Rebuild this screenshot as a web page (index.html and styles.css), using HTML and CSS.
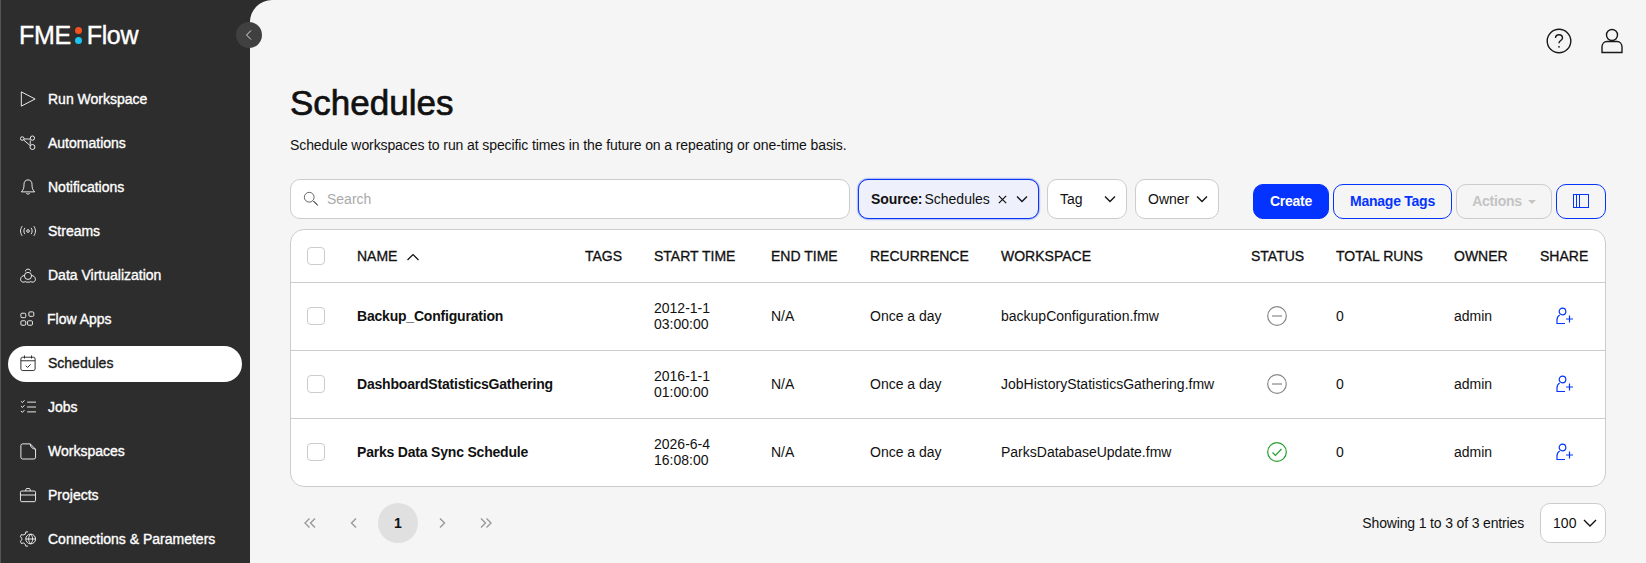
FILE: index.html
```html
<!DOCTYPE html>
<html lang="en">
<head>
  <meta charset="UTF-8" />
  <title>FME Flow - Schedules</title>
  <link rel="stylesheet" href="styles.css">
</head>
<body>
<div class="app">
  <div class="sidebar">
    <div class="logo"><span>FME</span><span class="logo-dots"><i class="dot-orange"></i><i class="dot-cyan"></i></span><span>Flow</span></div>
    <div class="nav">
      <a href="#"><svg viewBox="0 0 18 18"><path d="M1.500 1 17 9 1.500 17z"/></svg>Run Workspace</a>
      <a href="#"><svg viewBox="0 0 18 18"><circle cx="2.500" cy="4" r="2"/><circle cx="14" cy="3.500" r="2.400"/><circle cx="14" cy="13.500" r="2.800"/><path d="M4.500 4.500h7M4 5.500l7.500 6.500M11.500 6v5"/></svg>Automations</a>
      <a href="#"><svg viewBox="0 0 18 18"><path d="M9 1c-3 0-4.500 2.300-4.500 5 0 4-.5 6-3 8.500h15c-2.500-2.500-3-4.500-3-8.500 0-2.700-1.500-5-4.500-5zM7 16c.5 1.300 3.500 1.300 4 0"/></svg>Notifications</a>
      <a href="#"><svg viewBox="0 0 18 18"><circle cx="9" cy="9" r="1.500"/><path d="M5.500 5.500c-1.500 2-1.500 5 0 7M12.500 5.500c1.500 2 1.500 5 0 7M2.500 3.500c-2.500 3.500-2.500 7.500 0 11M15.500 3.500c2.500 3.500 2.500 7.500 0 11"/></svg>Streams</a>
      <a href="#"><svg viewBox="0 0 18 18"><circle cx="9" cy="10" r="4"/><path d="M6.300 5c-.8-3.500 6.200-3.500 5.400 0M5 9.500C.5 10-.5 15 2 16.500c1.500 1 3.500.5 4.500-.5M13 9.500c4.500.5 5.500 5.500 3 7-1.500 1-3.500.5-4.500-.5M6.500 17h5"/></svg>Data Virtualization</a>
      <a href="#" class="nav-apps"><svg viewBox="0 0 18 18"><rect x="1" y="2.500" width="5.500" height="5" rx="1.200"/><rect x="10" y="1" width="5.500" height="5" rx="1.200"/><rect x="1" y="11" width="5.500" height="5" rx="1.200"/><rect x="8.500" y="11" width="5.500" height="5" rx="1.200"/></svg>Flow Apps</a>
      <a href="#" class="active"><svg viewBox="0 0 18 18"><rect x="1" y="2.500" width="16" height="15" rx="2"/><path d="M1 6.500h16M5 .5v3.500M13 .5v3.500M6.500 12l2 2 3.500-3.500"/></svg>Schedules</a>
      <a href="#"><svg viewBox="0 0 18 18"><path d="M1 2.500 2.800 4 5 1.500M1 8l1.800 1.500L5 7M1 13.500 2.800 15 5 12.500M8 3.500h10M8 9h10M8 14.500h10"/></svg>Jobs</a>
      <a href="#"><svg viewBox="0 0 18 18"><path d="M3 1h8.500L17.500 7v9a2 2 0 0 1-2 2H3a2 2 0 0 1-2-2V3a2 2 0 0 1 2-2zM11.500 1c.3 3.500 2 5.500 6 6"/></svg>Workspaces</a>
      <a href="#"><svg viewBox="0 0 18 18"><rect x=".5" y="4.500" width="17" height="12" rx="1.500"/><path d="M.5 9h17M6.500 4.500V3c0-.8.500-1.300 1.300-1.300h2.400c.8 0 1.300.5 1.300 1.300v1.500"/></svg>Projects</a>
      <a href="#"><svg viewBox="0 0 18 18"><path d="M6.500 1h2.500M6.500 1 6 3.500 3.500 4.500 1.500 4 .5 6.500l1.500 1.500v2L.5 11.500 1.500 14l2.500-.5L6 15l.5 2h2.500"/><circle cx="12" cy="9" r="5.500"/><path d="M6.500 9h11M12 3.500c-3 3-3 8 0 11M12 3.500c3 3 3 8 0 11"/></svg>Connections &amp; Parameters</a>
    </div>
  </div>
  <div class="collapse-btn"><svg viewBox="0 0 12 12"><path d="M8 1.500 3.500 6 8 10.500"/></svg></div>

  <div class="main">
    <div class="topbar">
      <svg class="top-icon" viewBox="0 0 26 26"><circle cx="13" cy="13" r="11.800"/><path d="M9.500 10c0-2 1.500-3.300 3.500-3.300s3.500 1.300 3.500 3.200c0 2.600-3.500 2.700-3.500 5.300"/><circle class="fill" cx="13" cy="18.800" r=".9"/></svg>
      <svg class="top-icon" viewBox="0 0 26 26"><circle cx="13" cy="7" r="5.500"/><path d="M3 24.500v-5.500c0-3 2-5.500 5-5.500h10c3 0 5 2.500 5 5.500v5.500z"/></svg>
    </div>
    <h1>Schedules</h1>
    <p class="subtitle">Schedule workspaces to run at specific times in the future on a repeating or one-time basis.</p>

    <div class="toolbar">
      <div class="search">
        <svg viewBox="0 0 18 18"><circle cx="7" cy="7" r="5.500"/><path d="m11 11 5.500 5.500M12.500 11.500l4 4"/></svg>
        <span>Search</span>
      </div>
      <div class="filter filter-on">
        <b>Source:</b><span>Schedules</span>
        <svg class="x" viewBox="0 0 12 12"><path d="m2 2 8 8M10 2l-8 8"/></svg>
        <svg class="chev" viewBox="0 0 12 8"><path d="M1 1.500 6 6.500l5-5"/></svg>
      </div>
      <div class="filter filter-tag">Tag<svg class="chev" viewBox="0 0 12 8"><path d="M1 1.500 6 6.500l5-5"/></svg></div>
      <div class="filter filter-owner">Owner<svg class="chev" viewBox="0 0 12 8"><path d="M1 1.500 6 6.500l5-5"/></svg></div>
      <div class="actions">
        <button class="btn btn-primary">Create</button>
        <button class="btn btn-outline btn-tags">Manage Tags</button>
        <button class="btn btn-disabled">Actions<i class="caret"></i></button>
        <button class="btn btn-outline btn-icon"><svg viewBox="0 0 16 14"><rect x=".5" y=".5" width="15" height="13"/><path d="M3.500.5v13M6.500.5v13"/></svg></button>
      </div>
    </div>

    <div class="table-card">
      <table>
        <colgroup>
          <col class="c-check"><col class="c-name"><col class="c-tags"><col class="c-start"><col class="c-end"><col class="c-rec"><col class="c-ws"><col class="c-status"><col class="c-runs"><col class="c-owner"><col class="c-share">
        </colgroup>
        <thead>
          <tr>
            <th class="check"><span class="checkbox"></span></th>
            <th>NAME<svg class="sort" viewBox="0 0 14 8"><path d="M1.500 7 7 1.500 12.500 7"/></svg></th>
            <th>TAGS</th>
            <th>START TIME</th>
            <th>END TIME</th>
            <th>RECURRENCE</th>
            <th>WORKSPACE</th>
            <th class="status-head">STATUS</th>
            <th>TOTAL RUNS</th>
            <th>OWNER</th>
            <th>SHARE</th>
          </tr>
        </thead>
        <tbody>
          <tr>
            <td class="check"><span class="checkbox"></span></td>
            <td class="name">Backup_Configuration</td>
            <td></td>
            <td>2012-1-1<br>03:00:00</td>
            <td>N/A</td>
            <td>Once a day</td>
            <td>backupConfiguration.fmw</td>
            <td class="status"><svg class="off" viewBox="0 0 20 20"><circle cx="10" cy="10" r="9.300"/><path d="M5 10h10"/></svg></td>
            <td>0</td>
            <td>admin</td>
            <td class="share"><svg viewBox="0 0 18 18"><circle cx="6.500" cy="4.500" r="3.300"/><path d="M3.700 8C1.800 9 1 11 1 13v3.500h8M13.500 8.500v7M10 12h7"/></svg></td>
          </tr>
          <tr>
            <td class="check"><span class="checkbox"></span></td>
            <td class="name">DashboardStatisticsGathering</td>
            <td></td>
            <td>2016-1-1<br>01:00:00</td>
            <td>N/A</td>
            <td>Once a day</td>
            <td>JobHistoryStatisticsGathering.fmw</td>
            <td class="status"><svg class="off" viewBox="0 0 20 20"><circle cx="10" cy="10" r="9.300"/><path d="M5 10h10"/></svg></td>
            <td>0</td>
            <td>admin</td>
            <td class="share"><svg viewBox="0 0 18 18"><circle cx="6.500" cy="4.500" r="3.300"/><path d="M3.700 8C1.800 9 1 11 1 13v3.500h8M13.500 8.500v7M10 12h7"/></svg></td>
          </tr>
          <tr>
            <td class="check"><span class="checkbox"></span></td>
            <td class="name">Parks Data Sync Schedule</td>
            <td></td>
            <td>2026-6-4<br>16:08:00</td>
            <td>N/A</td>
            <td>Once a day</td>
            <td>ParksDatabaseUpdate.fmw</td>
            <td class="status"><svg class="ok" viewBox="0 0 20 20"><circle cx="10" cy="10" r="9.300"/><path d="m5.500 10.500 3 3 6-6.500"/></svg></td>
            <td>0</td>
            <td>admin</td>
            <td class="share"><svg viewBox="0 0 18 18"><circle cx="6.500" cy="4.500" r="3.300"/><path d="M3.700 8C1.800 9 1 11 1 13v3.500h8M13.500 8.500v7M10 12h7"/></svg></td>
          </tr>
        </tbody>
      </table>
    </div>

    <div class="footer-row">
      <div class="pager">
        <span class="page-btn"><svg viewBox="0 0 14 12"><path d="M6.500 1.500 2 6l4.500 4.500M12 1.500 7.500 6l4.500 4.500"/></svg></span>
        <span class="page-btn"><svg viewBox="0 0 14 12"><path d="M9 1.500 4.500 6 9 10.500"/></svg></span>
        <span class="page-btn current">1</span>
        <span class="page-btn"><svg viewBox="0 0 14 12"><path d="M5 1.500 9.500 6 5 10.500"/></svg></span>
        <span class="page-btn"><svg viewBox="0 0 14 12"><path d="M2 1.500 6.500 6 2 10.500M7.500 1.500 12 6l-4.500 4.500"/></svg></span>
      </div>
      <div class="entries">Showing 1 to 3 of 3 entries</div>
      <div class="page-size">100<svg viewBox="0 0 14 8"><path d="M1 1 7 7l6-6"/></svg></div>
    </div>
  </div>
</div>
</body>
</html>
```

FILE: styles.css
```css
* {
  box-sizing: border-box;
}
body {
  margin: 0;
  font-family: 'Liberation Sans', 'Inter', sans-serif;
  font-size: 14px;
  background-color: #2d2d2d;
  color: #111;
  height: 100vh;
  overflow: hidden;
}
svg {
  fill: none;
  stroke: currentColor;
  stroke-width: 1;
  flex-shrink: 0;
}
.app {
  display: flex;
  height: 100%;
  position: relative;
}
.sidebar {
  width: 250px;
  flex-shrink: 0;
  height: 100%;
  overflow: hidden;
  border-left: 1px solid #555;
  color: #fff;
}
.logo {
  display: flex;
  align-items: center;
  height: 28px;
  margin: 21px 0 0 18px;
  font-size: 25px;
  letter-spacing: -.35px;
  -webkit-text-stroke: .4px #fff;
}
.logo-dots {
  display: flex;
  flex-direction: column;
  gap: 3px;
  margin: 0 5px 0 4px;
}
.logo-dots i {
  width: 7px;
  height: 7px;
  border-radius: 50%;
}
.dot-orange {
  background: #f4511e;
}
.dot-cyan {
  background: #19c4f0;
}
.nav {
  margin-top: 33px;
  padding: 0 8px 0 7px;
}
.nav a {
  display: flex;
  align-items: center;
  gap: 12px;
  height: 36px;
  margin-bottom: 8px;
  padding: 0 0 2px 12px;
  border-radius: 18px;
  color: #fff;
  text-decoration: none;
  font-size: 14px;
  -webkit-text-stroke: .35px currentColor;
}
.nav a svg {
  width: 16px;
  height: 16px;
  overflow: visible;
}
.nav a.nav-apps {
  gap: 11px;
}
.nav a.active {
  background: #fff;
  color: #1a1a1a;
}
.collapse-btn {
  position: absolute;
  left: 236px;
  top: 22px;
  width: 26px;
  height: 26px;
  border-radius: 50%;
  background: #404040;
  color: #ddd;
  display: flex;
  align-items: center;
  justify-content: center;
  z-index: 2;
}
.collapse-btn svg {
  width: 12px;
  height: 12px;
}
.main {
  flex-grow: 1;
  min-width: 0;
  height: 100%;
  overflow: hidden;
  background: #f5f5f5;
  border-top-left-radius: 22px;
  padding: 0 40px;
}
.topbar {
  display: flex;
  justify-content: flex-end;
  gap: 27px;
  height: 27px;
  margin: 28px -19px 0 0;
}
.top-icon {
  width: 26px;
  height: 26px;
  stroke-width: 1.4;
  color: #1a1a1a;
}
.top-icon .fill {
  fill: currentColor;
  stroke: none;
}
h1 {
  margin: 26px 0 0;
  font-size: 35px;
  line-height: 44px;
  font-weight: 400;
  -webkit-text-stroke: .7px #111;
}
.subtitle {
  margin: 10px 0 0;
  font-size: 14px;
  line-height: 20px;
  letter-spacing: -.1px;
}
.toolbar {
  display: flex;
  align-items: flex-end;
  gap: 8px;
  margin-top: 24px;
}
.search {
  width: 560px;
  height: 40px;
  display: flex;
  align-items: center;
  gap: 8px;
  padding-left: 12px;
  background: #fff;
  border: 1px solid #ccc;
  border-radius: 10px;
  color: #aaa;
}
.search svg {
  width: 16px;
  height: 16px;
  color: #555;
}
.filter {
  height: 40px;
  display: flex;
  align-items: center;
  padding: 0 12px;
  background: #fff;
  border: 1px solid #ccc;
  border-radius: 10px;
  white-space: nowrap;
}
.filter .chev {
  width: 12px;
  height: 8px;
  stroke-width: 1.3;
}
.filter-on {
  width: 181px;
  background: #eef1fc;
  border-color: #0a36f5;
  box-shadow: 0 0 2px #0a36f5;
}
.filter-on b {
  margin-right: 2px;
  letter-spacing: -.1px;
}
.filter-on .x {
  width: 11px;
  height: 11px;
  margin: 1px 8px 0 7px;
  stroke-width: 1.3;
}
.filter-tag {
  width: 80px;
  justify-content: space-between;
  padding-right: 10px;
}
.filter-owner {
  width: 84px;
  justify-content: space-between;
  padding-right: 10px;
}
.actions {
  display: flex;
  gap: 4px;
  margin-left: 26px;
}
.btn {
  height: 35px;
  border-radius: 10px;
  font-family: inherit;
  font-size: 14px;
  font-weight: 700;
  letter-spacing: -.25px;
  padding: 0 0 2px;
  background: transparent;
}
.btn-primary {
  width: 76px;
  background: #0433ff;
  border: 1px solid #0433ff;
  color: #fff;
}
.btn-outline {
  border: 1px solid #0433ff;
  color: #0433ff;
}
.btn-tags {
  width: 119px;
}
.btn-disabled {
  width: 96px;
  border: 1px solid #ccc;
  color: #c4c4c4;
}
.caret {
  display: inline-block;
  margin-left: 6px;
  vertical-align: 2px;
  border: 4px solid transparent;
  border-top-color: #c4c4c4;
  border-bottom: 0;
}
.btn-icon {
  width: 50px;
  display: flex;
  align-items: center;
  justify-content: center;
}
.btn-icon svg {
  width: 16px;
  height: 14px;
}
.table-card {
  margin-top: 10px;
  background: #fff;
  border: 1px solid #ccc;
  border-radius: 14px;
  overflow: hidden;
}
table {
  width: 100%;
  border-collapse: collapse;
  table-layout: fixed;
}
.c-check { width: 66px; }
.c-name { width: 228px; }
.c-tags { width: 69px; }
.c-start { width: 117px; }
.c-end { width: 99px; }
.c-rec { width: 131px; }
.c-ws { width: 250px; }
.c-status { width: 85px; }
.c-runs { width: 118px; }
.c-owner { width: 86px; }
th {
  height: 52px;
  padding: 0;
  text-align: left;
  font-size: 14px;
  font-weight: 400;
  -webkit-text-stroke: .3px #111;
  border-bottom: 1px solid #ccc;
  white-space: nowrap;
}
td {
  height: 68px;
  padding: 0;
  line-height: 16px;
  border-bottom: 1px solid #ccc;
  white-space: nowrap;
}
tbody tr:last-child td {
  border-bottom: 0;
}
.check {
  padding-left: 16px;
}
.checkbox {
  display: block;
  width: 18px;
  height: 18px;
  border: 1px solid #ccc;
  border-radius: 4px;
}
.sort {
  width: 14px;
  height: 8px;
  margin-left: 9px;
  stroke-width: 1.2;
}
.name {
  font-weight: 700;
  letter-spacing: -.2px;
}
.status svg {
  display: block;
  width: 20px;
  height: 20px;
  margin-left: 16px;
  stroke-width: 1.2;
}
.off {
  color: #888;
}
.ok {
  color: #22a02a;
}
.share svg {
  display: block;
  width: 18px;
  height: 18px;
  margin-left: 16px;
  color: #0433ff;
  stroke-width: 1.2;
}
.footer-row {
  display: flex;
  align-items: center;
  margin-top: 16px;
}
.pager {
  display: flex;
  gap: 4px;
  flex-grow: 1;
}
.page-btn {
  width: 40px;
  height: 40px;
  display: flex;
  align-items: center;
  justify-content: center;
  border-radius: 50%;
  color: #999;
}
.page-btn svg {
  width: 14px;
  height: 12px;
  stroke-width: 1.4;
}
.page-btn.current {
  background: #e0e0e0;
  color: #111;
  font-weight: 700;
}
.entries {
  margin-right: 16px;
  letter-spacing: -.15px;
}
.page-size {
  width: 66px;
  height: 40px;
  display: flex;
  align-items: center;
  gap: 7px;
  padding-left: 12px;
  background: #fff;
  border: 1px solid #ccc;
  border-radius: 10px;
}
.page-size svg {
  width: 14px;
  height: 8px;
  stroke-width: 1.4;
}
```
